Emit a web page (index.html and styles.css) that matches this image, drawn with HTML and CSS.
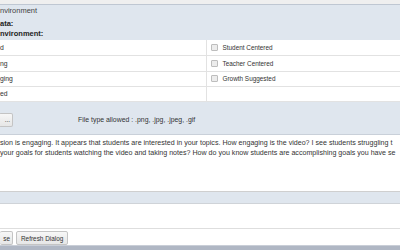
FILE: index.html
```html
<!DOCTYPE html>
<html lang="en">
<head>
    <meta charset="UTF-8">
    <meta name="viewport" content="width=device-width, initial-scale=1.0">
    <title>Observation Dialog</title>
    <link rel="stylesheet" href="styles.css">
</head>
<body>

    <div class="dialog">
        <div class="top-strip"></div>

        <section class="panel">
            <div class="legend">nvironment</div>
            <div class="field-label">ata:</div>
            <div class="field-label">nvironment:</div>

            <table class="env-table">
                <tbody>
                    <tr>
                        <td>d</td>
                        <td><label class="check"><span class="box"></span>Student Centered</label></td>
                    </tr>
                    <tr class="tall">
                        <td>ng</td>
                        <td><label class="check"><span class="box"></span>Teacher Centered</label></td>
                    </tr>
                    <tr>
                        <td>ging</td>
                        <td><label class="check"><span class="box"></span>Growth Suggested</label></td>
                    </tr>
                    <tr>
                        <td>ed</td>
                        <td></td>
                    </tr>
                </tbody>
            </table>

            <div class="upload">
                <button class="btn btn-browse">...</button>
                <span class="file-types">File type allowed : .png, .jpg, .jpeg, .gif</span>
            </div>
        </section>

        <div class="notes">
            <p>sion is engaging. It appears that students are interested in your topics. How engaging is the video? I see students struggling t<br>
            your goals for students watching the video and taking notes? How do you know students are accomplishing goals you have se</p>
        </div>

        <div class="band"></div>
        <div class="blank"></div>

        <div class="actions">
            <button class="btn">se</button>
            <button class="btn">Refresh Dialog</button>
        </div>

        <div class="bottom-bar"></div>
    </div>

</body>
</html>
```

FILE: styles.css
```css
/* Reset */
* {
    margin: 0;
    padding: 0;
    box-sizing: border-box;
}

body {
    font-family: 'Liberation Sans', Arial, sans-serif;
    background-color: #ffffff;
    color: #333;
    width: 400px;
    height: 250px;
    overflow: hidden;
}

.dialog {
    display: flex;
    flex-direction: column;
    height: 250px;
}

.top-strip {
    height: 5px;
    background-color: #efefef;
    border-bottom: 1px solid #bfc7d2;
}

/* Panel atas */
.panel {
    background-color: #dfe6ee;
    border-bottom: 1px solid #c9d0d9;
    height: 130px;
}

.legend {
    font-size: 7.5px;
    line-height: 12px;
    color: #444;
    margin-bottom: 2px;
}

.field-label {
    font-size: 7.5px;
    font-weight: bold;
    line-height: 10px;
    color: #222;
}

.env-table {
    width: 100%;
    margin-top: 1px;
    border-collapse: collapse;
    background-color: #ffffff;
    font-size: 6.8px;
}

.env-table td {
    height: 15px;
    padding: 0;
    border-bottom: 1px solid #e2e2e2;
    vertical-align: middle;
}

.env-table tr.tall td {
    height: 16px;
}

.env-table td:first-child {
    width: 206px;
    border-right: 1px solid #e2e2e2;
}

.check {
    display: flex;
    align-items: center;
    gap: 5px;
    padding-left: 4px;
    font-size: 6.4px;
    color: #333;
}

.box {
    width: 7px;
    height: 7px;
    border: 1px solid #bdbdbd;
    border-radius: 1px;
    background-color: #ececec;
}

/* Upload */
.upload {
    display: flex;
    align-items: center;
    gap: 65px;
    margin-top: 11px;
}

.file-types {
    font-size: 6.9px;
    color: #333;
}

/* Tombol */
.btn {
    font-family: 'Liberation Sans', Arial, sans-serif;
    font-size: 6.4px;
    color: #333;
    height: 14px;
    padding: 0 4px;
    background: linear-gradient(#f7f7f7, #e6e6e6);
    border: 1px solid #c4c4c4;
    border-radius: 2px;
}

.btn-browse {
    width: 14px;
    margin-left: -1px;
    border-left: none;
    text-align: right;
    padding: 0 2px 0 0;
}

/* Catatan */
.notes {
    height: 57px;
    padding-top: 3px;
    border-bottom: 1px solid #cfcfcf;
    overflow: hidden;
}

.notes p {
    font-size: 7.1px;
    line-height: 10px;
    color: #333;
    white-space: nowrap;
}

.band {
    height: 12px;
    background-color: #dfe6ee;
    border-bottom: 1px solid #cfd3d8;
}

.blank {
    height: 25px;
    border-bottom: 1px solid #dedede;
}

.actions {
    display: flex;
    gap: 3px;
    padding-top: 2px;
    height: 16px;
}

.actions .btn:first-child {
    width: 13px;
    border-left: none;
    padding: 0 2px 0 0;
    text-align: right;
}

.bottom-bar {
    flex: 1;
    background-color: #b0b7c4;
    border-top: 1px solid #c9ced7;
}
```
